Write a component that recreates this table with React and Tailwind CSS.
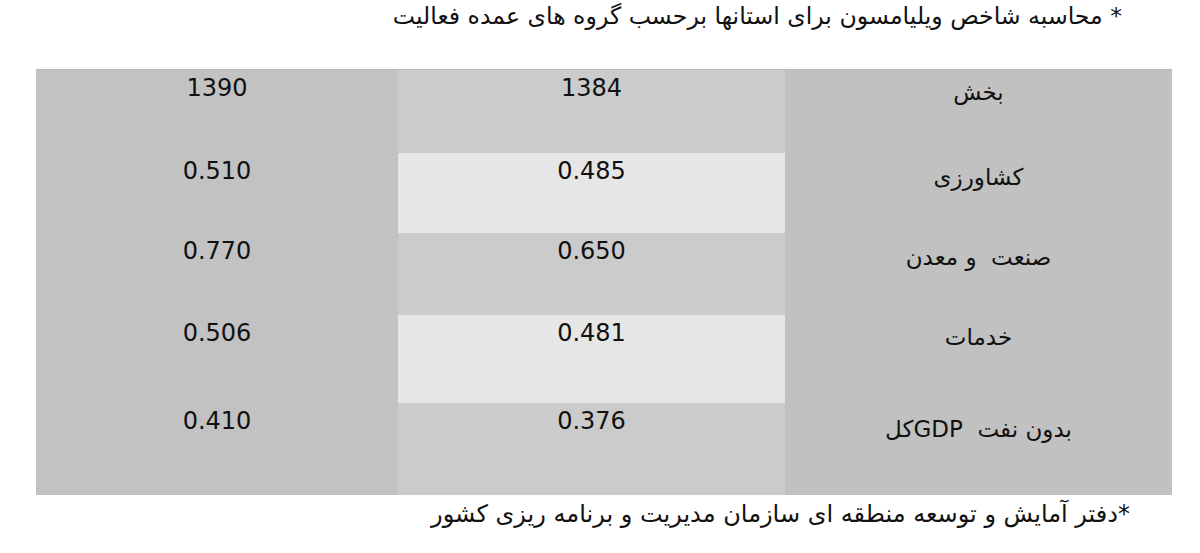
const rows = [
  { a: '1390', b: '1384', label: 'بخش', h: 'h-[83px]', mid: 'bg-[#cbcbcb]', pt: 'pt-[11px]' },
  { a: '0.510', b: '0.485', label: 'کشاورزی', h: 'h-[80px]', mid: 'bg-[#e6e6e6]', pt: 'pt-[13px]' },
  { a: '0.770', b: '0.650', label: 'صنعت  و معدن', h: 'h-[82px]', mid: 'bg-[#cbcbcb]', pt: 'pt-[13px]' },
  { a: '0.506', b: '0.481', label: 'خدمات', h: 'h-[88px]', mid: 'bg-[#e6e6e6]', pt: 'pt-[11px]' },
  { a: '0.410', b: '0.376', label: 'بدون نفت  GDPکل', h: 'h-[92px]', mid: 'bg-[#cbcbcb]', pt: 'pt-[15px]' },
];

export default function App() {
  return (
    <div className="min-h-[553px] w-[1200px] bg-white text-[#111] font-['DejaVu_Sans',sans-serif]">
      {/* title */}
      <div dir="rtl" className="h-[69px] pr-[78px] pt-[1px] text-[23.6px] leading-[30px]">
        * محاسبه شاخص ویلیامسون برای استانها برحسب گروه های عمده فعالیت
      </div>

      {/* table */}
      <div className="ml-[36px] w-[1136px] border-t border-[#b9b9b9]">
        {rows.map((r) => (
          <div key={r.label} className={`grid grid-cols-[362px_387px_387px] ${r.h}`}>
            <div className="bg-[#c2c2c2] pt-[6px] text-center text-[24px] leading-none">{r.a}</div>
            <div className={`${r.mid} pt-[6px] text-center text-[24px] leading-none`}>{r.b}</div>
            <div dir="rtl" className={`bg-[#c1c1c1] ${r.pt} text-center text-[23px] leading-none whitespace-pre`}>
              {r.label}
            </div>
          </div>
        ))}
      </div>

      {/* source */}
      <div dir="rtl" className="pr-[70px] pt-[4px] text-[24px] leading-[30px]">
        *دفتر آمایش و توسعه منطقه ای سازمان مدیریت و برنامه ریزی کشور
      </div>
    </div>
  );
}
